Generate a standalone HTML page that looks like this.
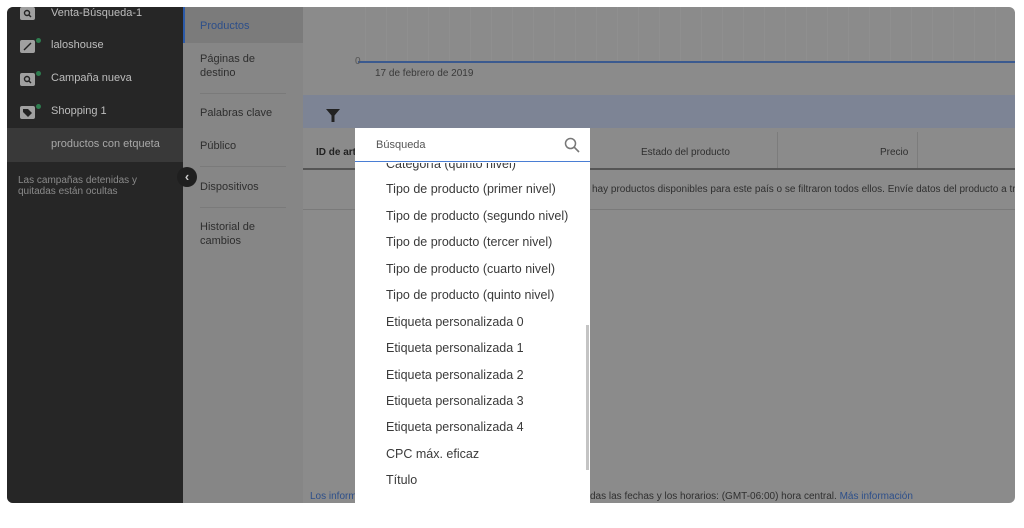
<!DOCTYPE html>
<html><head><meta charset="utf-8"><style>
*{margin:0;padding:0;box-sizing:border-box}
body{width:1024px;height:514px;background:#fff;position:relative;overflow:hidden;font-family:"Liberation Sans",sans-serif}
.frame{position:absolute;left:7px;top:7px;width:1008px;height:496px;border-radius:6px;overflow:hidden;background:#8b8b8b}
.abs{position:absolute}
.side{left:0;top:0;width:176px;height:496px;background:#262626}
.si{position:absolute;left:44px;font-size:11px;color:#bdbdbd;white-space:nowrap}
.ic{position:absolute;left:13px;width:15px;height:13px;background:#a0a0a0;border-radius:2px}
.dot{position:absolute;width:5px;height:5px;border-radius:50%;background:#2e7d4f}
.nav{left:176px;top:0;width:120px;height:496px;background:#868686}
.ni{position:absolute;left:17px;font-size:11px;color:#2e2e2e;line-height:14px}
.sep{position:absolute;left:17px;width:86px;height:1px;background:#7a7a7a}
.vl{position:absolute;top:0;width:1px;height:55px;background:#8f8f8f}
.dd{position:absolute;left:355px;top:128px;width:235px;height:400px;background:#fff}
.it{position:absolute;left:31px;font-size:12.5px;color:#3a3a3a;white-space:nowrap}
.tx{font-size:10px;color:#2f2f2f;white-space:nowrap;position:absolute}
</style></head><body>
<div class="frame">
 <div class="abs side">
  <div class="ic" style="top:0px"><svg width="15" height="13"><circle cx="7" cy="6" r="2.5" fill="none" stroke="#222" stroke-width="1.4"/><path d="M9 8L11 10" stroke="#222" stroke-width="1.4"/></svg></div><div class="si" style="top:0px">Venta-Búsqueda-1</div>
  <div class="ic" style="top:33px"><svg width="15" height="13"><path d="M4 10L11 3" stroke="#222" stroke-width="1.4"/></svg></div><div class="dot" style="left:29px;top:31px"></div><div class="si" style="top:32px">laloshouse</div>
  <div class="ic" style="top:66px"><svg width="15" height="13"><circle cx="7" cy="6" r="2.5" fill="none" stroke="#222" stroke-width="1.4"/><path d="M9 8L11 10" stroke="#222" stroke-width="1.4"/></svg></div><div class="dot" style="left:29px;top:64px"></div><div class="si" style="top:65px">Campaña nueva</div>
  <div class="ic" style="top:99px"><svg width="15" height="13"><path d="M3 3H8L12 7L8 11L3 6Z" fill="#222"/></svg></div><div class="dot" style="left:29px;top:97px"></div><div class="si" style="top:98px">Shopping 1</div>
  <div class="abs" style="left:0;top:121px;width:176px;height:34px;background:#393939"></div>
  <div class="si" style="top:131px;color:#a8a8a8">productos con etqueta</div>
  <div class="abs" style="left:11px;top:168px;font-size:10px;color:#8a8a8a;line-height:11px">Las campañas detenidas y<br>quitadas están ocultas</div>
 </div>
 <div class="abs nav">
  <div class="abs" style="left:0;top:0;width:120px;height:36px;background:#7b7b7b;border-left:2px solid #2c5aa8"></div>
  <div class="ni" style="top:12px;color:#2d4f8a">Productos</div>
  <div class="ni" style="top:45px">Páginas de<br>destino</div>
  <div class="sep" style="top:86px"></div>
  <div class="ni" style="top:99px">Palabras clave</div>
  <div class="ni" style="top:132px">Público</div>
  <div class="sep" style="top:159px"></div>
  <div class="ni" style="top:173px">Dispositivos</div>
  <div class="sep" style="top:200px"></div>
  <div class="ni" style="top:213px">Historial de<br>cambios</div>
 </div>
 <div class="abs" style="left:170px;top:160px;width:20px;height:20px;border-radius:50%;background:#1f1f1f;color:#ccc;font-size:13px;line-height:19px;text-align:center;font-weight:bold">‹</div>
 <div class="abs" style="left:296px;top:0;width:712px;height:88px">
  <div class="vl" style="left:62px"></div><div class="vl" style="left:83px"></div><div class="vl" style="left:104px"></div><div class="vl" style="left:125px"></div><div class="vl" style="left:146px"></div><div class="vl" style="left:167px"></div><div class="vl" style="left:188px"></div><div class="vl" style="left:209px"></div><div class="vl" style="left:230px"></div><div class="vl" style="left:251px"></div><div class="vl" style="left:272px"></div><div class="vl" style="left:293px"></div><div class="vl" style="left:314px"></div><div class="vl" style="left:335px"></div><div class="vl" style="left:356px"></div><div class="vl" style="left:377px"></div><div class="vl" style="left:398px"></div><div class="vl" style="left:419px"></div><div class="vl" style="left:440px"></div><div class="vl" style="left:461px"></div><div class="vl" style="left:482px"></div><div class="vl" style="left:503px"></div><div class="vl" style="left:524px"></div><div class="vl" style="left:545px"></div><div class="vl" style="left:566px"></div><div class="vl" style="left:587px"></div><div class="vl" style="left:608px"></div><div class="vl" style="left:629px"></div><div class="vl" style="left:650px"></div><div class="vl" style="left:671px"></div><div class="vl" style="left:692px"></div>
  <div class="abs" style="left:55px;top:54px;width:660px;height:2px;background:#3b5a8f"></div>
  <div class="tx" style="left:52px;top:49px;color:#555">0</div>
  <div class="tx" style="left:72px;top:61px;color:#3a3a3a">17 de febrero de 2019</div>
 </div>
 <div class="abs" style="left:296px;top:88px;width:712px;height:33px;background:#7d8495"></div>
 <svg class="abs" style="left:319px;top:102px" width="14" height="14" viewBox="0 0 14 14"><path d="M0 0H14L8.5 6.5V13H5.5V6.5Z" fill="#222"/></svg>
 <div class="abs" style="left:296px;top:121px;width:712px;height:42px;border-bottom:2px solid #555"></div>
 <div class="abs" style="left:770px;top:125px;width:1px;height:36px;background:#7c7c7c"></div>
 <div class="abs" style="left:910px;top:125px;width:1px;height:36px;background:#7c7c7c"></div>
 <div class="tx" style="left:309px;top:140px;font-weight:bold;color:#222">ID de art</div>
 <div class="tx" style="left:634px;top:140px">Estado del producto</div>
 <div class="tx" style="left:873px;top:140px">Precio</div>
 <div class="tx" style="left:585px;top:177px">hay productos disponibles para este país o se filtraron todos ellos. Envíe datos del producto a tra</div>
 <div class="abs" style="left:296px;top:202px;width:712px;height:1px;background:#7a7a7a"></div>
 <div class="tx" style="left:303px;top:484px;color:#2d4f8a">Los inform</div>
 <div class="tx" style="left:583px;top:484px">das las fechas y los horarios: (GMT-06:00) hora central. <span style="color:#2d4f8a">Más información</span></div>
</div>
<div class="dd">
 <div class="it" style="top:29px;font-size:12.5px;clip-path:inset(6px 0 0 0)">Categoría (quinto nivel)</div>
 <div class="abs" style="left:0;top:0;width:235px;height:34px;background:#fff;border-bottom:1px solid #4a7ed4"></div>
 <div class="abs" style="left:21px;top:11px;font-size:11px;color:#555">Búsqueda</div>
 <svg class="abs" style="left:209px;top:9px" width="16" height="16" viewBox="0 0 16 16"><circle cx="6.5" cy="6.5" r="5" fill="none" stroke="#777" stroke-width="1.5"/><path d="M10.2 10.2L15 15" stroke="#777" stroke-width="1.6"/></svg>
 <div class="it" style="top:54px">Tipo de producto (primer nivel)</div>
 <div class="it" style="top:81px">Tipo de producto (segundo nivel)</div>
 <div class="it" style="top:107px">Tipo de producto (tercer nivel)</div>
 <div class="it" style="top:134px">Tipo de producto (cuarto nivel)</div>
 <div class="it" style="top:160px">Tipo de producto (quinto nivel)</div>
 <div class="it" style="top:187px">Etiqueta personalizada 0</div>
 <div class="it" style="top:213px">Etiqueta personalizada 1</div>
 <div class="it" style="top:240px">Etiqueta personalizada 2</div>
 <div class="it" style="top:266px">Etiqueta personalizada 3</div>
 <div class="it" style="top:292px">Etiqueta personalizada 4</div>
 <div class="it" style="top:319px">CPC máx. eficaz</div>
 <div class="it" style="top:345px">Título</div>
 <div class="abs" style="left:231px;top:197px;width:3px;height:145px;background:#c4c4c4"></div>
</div>
</body></html>
